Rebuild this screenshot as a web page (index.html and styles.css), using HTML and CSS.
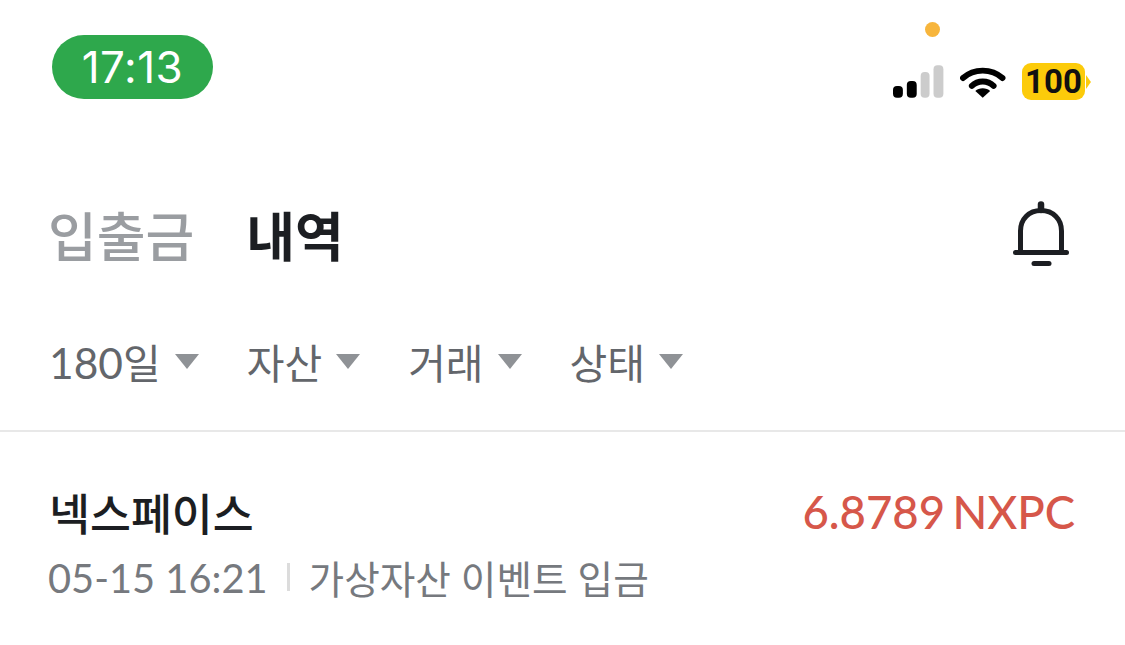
FILE: index.html
```html
<!DOCTYPE html>
<html lang="ko">
<head>
  <meta charset="UTF-8" />
  <title>입출금 내역</title>
  <link rel="stylesheet" href="styles.css">
</head>
<body>
  <div class="status">
    <div class="clock">17:13</div>
    <div class="status-right">
      <span class="dot"></span>
      <div class="status-icons">
        <svg class="signal" width="52" height="33" viewBox="0 0 52 33">
          <rect x="0" y="21" width="10" height="12" rx="4" fill="#000"/>
          <rect x="14" y="16" width="10" height="17" rx="4" fill="#000"/>
          <rect x="28" y="7" width="9" height="26" rx="4" fill="#ccc"/>
          <rect x="41" y="0" width="10" height="33" rx="4" fill="#ccc"/>
        </svg>
        <svg class="wifi" width="46" height="34" viewBox="0 0 46 34">
          <path d="M3 13 C14 3 32 3 43 13" fill="none" stroke="#000" stroke-width="6" stroke-linecap="round"/>
          <path d="M12 21 C18 15 28 15 34 21" fill="none" stroke="#000" stroke-width="6" stroke-linecap="round"/>
          <path d="M23 33 L15.500 26 C19 22.500 27 22.500 30.500 26 Z" fill="#000"/>
        </svg>
        <div class="battery">100</div>
        <svg class="battery-tip" width="5" height="14" viewBox="0 0 5 14">
          <path d="M0 0 L5 7 L0 14 Z" fill="#fccb0a"/>
        </svg>
      </div>
    </div>
  </div>

  <div class="title-row">
    <div class="tabs">
      <span class="tab">입출금</span>
      <span class="tab active">내역</span>
    </div>
    <svg class="bell" width="56" height="66" viewBox="0 0 56 66">
      <path d="M28 3.500 V9" fill="none" stroke="#1c1e22" stroke-width="6.500" stroke-linecap="round"/>
      <path d="M7.500 51 V30 C7.500 18 16 9.500 28 9.500 C40 9.500 48.500 18 48.500 30 V51" fill="none" stroke="#1c1e22" stroke-width="5"/>
      <path d="M2.500 51.500 H53.500" fill="none" stroke="#1c1e22" stroke-width="5" stroke-linecap="round"/>
      <path d="M21 62.500 H36" fill="none" stroke="#1c1e22" stroke-width="5" stroke-linecap="round"/>
    </svg>
  </div>

  <div class="filters">
    <div class="filter"><span><span class="num">180</span>일</span><span class="caret"></span></div>
    <div class="filter">자산<span class="caret"></span></div>
    <div class="filter">거래<span class="caret"></span></div>
    <div class="filter">상태<span class="caret"></span></div>
  </div>

  <div class="row">
    <div class="row-top">
      <span class="name">넥스페이스</span>
      <span class="amount">6.8789 NXPC</span>
    </div>
    <div class="row-sub">
      <span class="when">05-15 16:21</span>
      <span class="sep"></span>
      <span>가상자산 이벤트 입금</span>
    </div>
  </div>
</body>
</html>
```

FILE: styles.css
```css
* {
  box-sizing: border-box;
}
body {
  font-family: Lato, 'Noto Sans CJK KR', sans-serif;
  background-color: #fff;
  color: #1c1e22;
  margin: 0;
  overflow: hidden;
}
.status {
  display: flex;
  justify-content: space-between;
  height: 126px;
  padding: 35px 34px 0 52px;
}
.clock {
  width: 161px;
  height: 64px;
  border-radius: 32px;
  background-color: #2ea84c;
  color: #fff;
  font-family: Inter, sans-serif;
  font-size: 44px;
  line-height: 64px;
  text-align: center;
  letter-spacing: 0.500px;
}
.status-right {
  position: relative;
  width: 200px;
}
.dot {
  position: absolute;
  top: -13px;
  left: 34px;
  width: 15px;
  height: 15px;
  border-radius: 50%;
  background-color: #f7b53c;
}
.status-icons {
  display: flex;
  align-items: center;
  margin-top: 28px;
  margin-left: 2px;
}
.signal {
  margin-right: 16px;
}
.wifi {
  margin-right: 16px;
}
.battery {
  width: 64px;
  height: 37px;
  border-radius: 9px;
  background-color: #fccb0a;
  color: #111;
  font-family: Roboto, sans-serif;
  font-size: 33px;
  font-weight: 700;
  line-height: 37px;
  text-align: center;
}
.battery-tip {
  margin-left: 1px;
}
.title-row {
  display: flex;
  justify-content: space-between;
  align-items: center;
  height: 90px;
  padding: 0 56px 0 48px;
  margin-top: 63px;
}
.tabs {
  display: flex;
  gap: 52px;
}
.tab {
  font-size: 53px;
  font-weight: 500;
  color: #9a9da1;
}
.tab.active {
  color: #1c1e22;
  font-weight: 700;
}
.filters {
  display: flex;
  gap: 48px;
  align-items: center;
  height: 60px;
  margin-top: 52px;
  padding-left: 49px;
}
.filter {
  display: flex;
  align-items: center;
  gap: 14px;
  font-size: 41px;
  color: #63666b;
}
.num {
  font-size: 42.500px;
}
.caret {
  width: 0;
  height: 0;
  border-left: 12px solid transparent;
  border-right: 12px solid transparent;
  border-top: 15px solid #8f9296;
}
.row {
  margin-top: 39px;
  border-top: 2px solid #e8e8e8;
  padding: 49px 50px 0 49px;
}
.row-top {
  display: flex;
  justify-content: space-between;
  align-items: center;
  height: 60px;
}
.name {
  font-size: 44.500px;
  font-weight: 500;
  color: #1c1e22;
}
.amount {
  font-size: 45.500px;
  font-weight: 500;
  word-spacing: -4px;
  color: #d6574a;
}
.row-sub {
  display: flex;
  align-items: center;
  gap: 19px;
  height: 50px;
  margin-top: 11px;
  font-size: 38.700px;
  color: #76797e;
}
.when {
  margin-left: -1px;
  font-size: 39.800px;
}
.sep {
  width: 3px;
  height: 28px;
  background-color: #dcdcdc;
}
```
